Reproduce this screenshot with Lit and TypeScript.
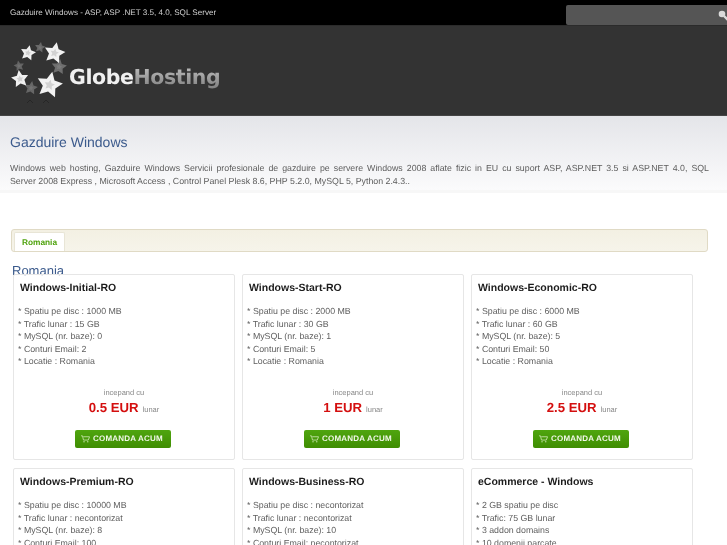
import { LitElement, html, css, svg } from "lit";
import { customElement } from "lit/decorators.js";

type Plan = { name: string; lines: string[]; price?: string };

const PLANS: Plan[] = [
    {
        name: "Windows-Initial-RO",
        lines: ["Spatiu pe disc : 1000 MB", "Trafic lunar : 15 GB", "MySQL (nr. baze): 0", "Conturi Email: 2", "Locatie : Romania"],
        price: "0.5 EUR",
    },
    {
        name: "Windows-Start-RO",
        lines: ["Spatiu pe disc : 2000 MB", "Trafic lunar : 30 GB", "MySQL (nr. baze): 1", "Conturi Email: 5", "Locatie : Romania"],
        price: "1 EUR",
    },
    {
        name: "Windows-Economic-RO",
        lines: ["Spatiu pe disc : 6000 MB", "Trafic lunar : 60 GB", "MySQL (nr. baze): 5", "Conturi Email: 50", "Locatie : Romania"],
        price: "2.5 EUR",
    },
    {
        name: "Windows-Premium-RO",
        lines: ["Spatiu pe disc : 10000 MB", "Trafic lunar : necontorizat", "MySQL (nr. baze): 8", "Conturi Email: 100"],
    },
    {
        name: "Windows-Business-RO",
        lines: ["Spatiu pe disc : necontorizat", "Trafic lunar : necontorizat", "MySQL (nr. baze): 10", "Conturi Email: necontorizat"],
    },
    {
        name: "eCommerce - Windows",
        lines: ["2 GB spatiu pe disc", "Trafic: 75 GB lunar", "3 addon domains", "10 domenii parcate"],
    },
];

// cx, cy, raza, rotatie, culoare, culoare centru
const STARS: [number, number, number, number, string, string][] = [
    [40, 47.5, 5.5, 10, "#686868", "#747474"],
    [19, 66, 5.5, -10, "#646464", "#707070"],
    [31, 88, 7, 10, "#666666", "#727272"],
    [59, 67, 8, 8, "#6e6e6e", "#7c7c7c"],
    [28, 53, 8, 12, "#f0f0f0", "#cfcfcf"],
    [54.5, 53, 11, 12, "#f2f2f2", "#d2d2d2"],
    [20, 79, 9, -8, "#f0f0f0", "#cfcfcf"],
    [49.5, 85, 13.5, 12, "#f2f2f2", "#d2d2d2"],
];

function starPoints(cx: number, cy: number, r: number, rot: number): string {
    const pts: string[] = [];
    for (let i = 0; i < 10; i++) {
        const rad = i % 2 === 0 ? r : r * 0.5;
        const a = ((-90 + rot + i * 36) * Math.PI) / 180;
        pts.push(`${(cx + rad * Math.cos(a)).toFixed(1)},${(cy + rad * Math.sin(a)).toFixed(1)}`);
    }
    return pts.join(" ");
}

@customElement("app-root")
export class AppRoot extends LitElement {
    private renderLogoStars() {
        return html`<svg class="stars" viewBox="0 35 68 75" width="68" height="75" aria-hidden="true">
            <path d="M27 103l3-3 3 3M43 103l3-3 3 3" fill="none" stroke="#262626" stroke-width="1" />
            ${STARS.map(([x, y, r, rot, fill, inner]) => svg`
                <polygon points=${starPoints(x, y, r, rot)} fill=${fill} />
                <polygon points=${starPoints(x, y, r * 0.4, rot)} fill=${inner} />
            `)}
        </svg>`;
    }

    private renderPlan(p: Plan) {
        return html`<div class="card">
            <div class="name">${p.name}</div>
            <div class="specs">${p.lines.map((l) => html`<div>* ${l}</div>`)}</div>
            ${p.price
                ? html`<div class="buy">
                      <div class="from">incepand cu</div>
                      <div class="price"><b>${p.price}</b><span>lunar</span></div>
                      <div class="btn">
                          <svg viewBox="0 0 12 10" width="9" height="8" aria-hidden="true">
                              <path d="M0 .8h2l1.3 5.6h6.4L11.4 2H3" fill="none" stroke="#b9dc9a" stroke-width="1.3" />
                              <circle cx="4" cy="8.6" r="1" fill="#b9dc9a" />
                              <circle cx="9" cy="8.6" r="1" fill="#b9dc9a" />
                          </svg>
                          COMANDA ACUM
                      </div>
                  </div>`
                : ""}
        </div>`;
    }

    protected render() {
        return html`
            <div class="topbar">
                <div class="tagline">Gazduire Windows - ASP, ASP .NET 3.5, 4.0, SQL Server</div>
                <div class="search">
                    <svg viewBox="0 0 9 12" width="9" height="12" aria-hidden="true">
                        <circle cx="4" cy="4" r="3.3" fill="#dadada" />
                        <path d="M6 6l4 4" stroke="#dadada" stroke-width="2.4" />
                    </svg>
                </div>
            </div>
            <div class="header">
                ${this.renderLogoStars()}
                <div class="wordmark"><span class="globe">Globe</span><span class="hosting">Hosting</span></div>
            </div>
            <div class="intro">
                <h1>Gazduire Windows</h1>
                <p>
                    Windows web hosting, Gazduire Windows Servicii profesionale de gazduire pe servere Windows 2008 aflate fizic in EU cu suport ASP, ASP.NET 3.5 si ASP.NET 4.0, SQL Server&nbsp;2008 Express , Microsoft Access , Control Panel Plesk 8.6, PHP 5.2.0, MySQL 5, Python 2.4.3..
                </p>
            </div>
            <div class="tabs"><div class="tab">Romania</div></div>
            <h2>Romania</h2>
            <div class="grid">${PLANS.map((p) => this.renderPlan(p))}</div>
        `;
    }

    static styles = css`
        :host {
            display: block;
            height: 545px;
            overflow: hidden;
            background: #fff;
            font-family: "Liberation Sans", Arial, sans-serif;
            color: #555;
            text-rendering: geometricPrecision;
            /* la capture de reference est reduite, donc un peu floue */
            filter: blur(0.3px);
        }

        .topbar {
            height: 25px;
            background: #000;
            border-bottom: 1px solid #2b2b2b;
            display: flex;
            justify-content: space-between;
            align-items: flex-end;
        }

        .tagline {
            font-size: 8.1px;
            line-height: 11px;
            color: #d0d0d0;
            padding: 0 0 7px 10px;
        }

        .search {
            width: 161px;
            height: 20px;
            box-sizing: border-box;
            background: #555;
            border-radius: 2px 0 0 2px;
            display: flex;
            justify-content: flex-end;
            padding: 5px 0 0;
        }

        .header {
            height: 89px;
            background: #333;
            border-bottom: 1px solid #444;
            display: flex;
            align-items: flex-start;
        }

        .stars {
            margin-top: 9px;
            flex: none;
        }

        .wordmark {
            margin: 35px 0 0 1px;
            font-family: "DejaVu Sans", sans-serif;
            font-weight: 700;
            font-size: 20.5px;
            line-height: 32px;
            letter-spacing: -0.4px;
        }

        .globe {
            color: #f0f0f0;
        }

        .hosting {
            background: linear-gradient(#c0c0c0, #808080);
            -webkit-background-clip: text;
            background-clip: text;
            color: transparent;
        }

        .intro {
            height: 74px;
            padding: 0 18px 0 10px;
            background: linear-gradient(#e4e5e9, #fbfbfc);
            border-bottom: 3px solid #f7f7f7;
        }

        h1 {
            margin: 0;
            padding-top: 17px;
            font-size: 14px;
            line-height: 18px;
            font-weight: 400;
            color: #3b5a8c;
        }

        .intro p {
            margin: 11px 0 0;
            font-size: 8.8px;
            line-height: 13px;
            text-align: justify;
            color: #5d5d5d;
        }

        .tabs {
            margin: 36px 19px 0 11px;
            height: 19px;
            border: 1px solid #e0dac5;
            border-radius: 3px;
            background: linear-gradient(#f3f0e3, #f6f4ea);
            padding: 2px 0 0 2px;
        }

        .tab {
            width: 51px;
            height: 19px;
            background: #fff;
            border: 1px solid #e8e5d6;
            border-bottom: 0;
            border-radius: 2px 2px 0 0;
            box-sizing: border-box;
            text-align: center;
            font-size: 8.3px;
            line-height: 18px;
            font-weight: 700;
            color: #4fa30e;
        }

        h2 {
            margin: 11px 0 0 12px;
            font-size: 13px;
            line-height: 16px;
            height: 11px;
            font-weight: 400;
            color: #3b5a8c;
        }

        .grid {
            display: grid;
            grid-template-columns: repeat(3, 222px);
            gap: 8px 7px;
            margin: 0 0 0 13px;
        }

        .card {
            height: 186px;
            box-sizing: border-box;
            border: 1px solid #e6e6e6;
            border-radius: 2px;
            padding: 7px 4px 0;
            display: flex;
            flex-direction: column;
        }

        .name {
            padding-left: 2px;
            font-size: 10.5px;
            line-height: 13px;
            font-weight: 700;
            color: #1c1c1c;
        }

        .specs {
            margin-top: 10px;
            font-size: 8.8px;
            line-height: 12.5px;
            color: #606060;
        }

        .buy {
            margin-top: 20px;
            display: flex;
            flex-direction: column;
            align-items: center;
        }

        .from {
            font-size: 7.5px;
            line-height: 10px;
            color: #888;
        }

        .price {
            margin-top: 1px;
            line-height: 18px;
        }

        .price b {
            font-size: 13.2px;
            color: #d40f0f;
        }

        .price span {
            margin-left: 4px;
            font-size: 7.5px;
            color: #888;
        }

        .btn {
            margin: 11px 2px 0 0;
            width: 96px;
            height: 18px;
            box-sizing: border-box;
            padding-right: 2px;
            border-radius: 2px;
            background: linear-gradient(#4fa50f, #3f8d02);
            display: flex;
            align-items: center;
            justify-content: center;
            gap: 3px;
            font-size: 8px;
            font-weight: 700;
            letter-spacing: 0.2px;
            color: #f2f8ea;
        }
    `;
}
